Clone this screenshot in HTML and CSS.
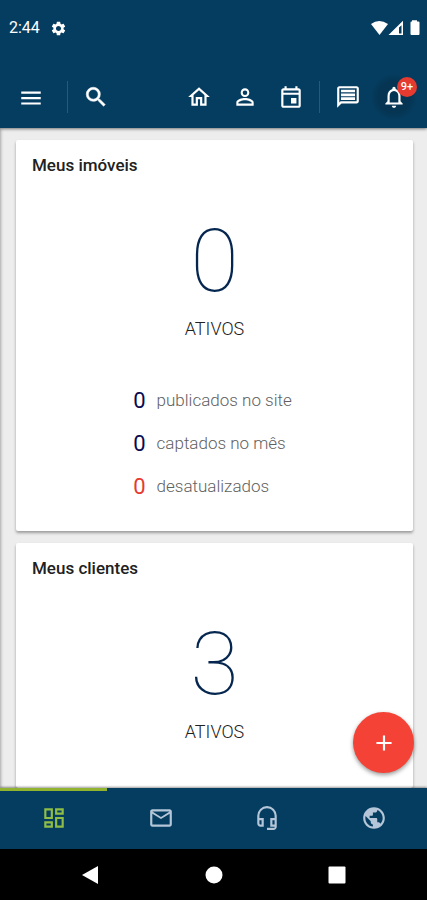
FILE: index.html
```html
<!DOCTYPE html>
<html lang="pt-BR">
<head>
<meta charset="utf-8">
<meta name="viewport" content="width=device-width, initial-scale=1">
<title>Painel</title>
<link rel="stylesheet" href="styles.css">
</head>
<body>
<header class="header">
  <div class="status">
    <span class="clock">2:44</span>
    <svg class="gear" viewBox="0 0 24 24"><path d="M19.14 12.94c.04-.3.06-.61.06-.94 0-.32-.02-.64-.07-.94l2.03-1.58c.18-.14.23-.41.12-.61l-1.92-3.32c-.12-.22-.37-.29-.59-.22l-2.39.96c-.5-.38-1.03-.7-1.62-.94l-.36-2.54c-.04-.24-.24-.41-.48-.41h-3.84c-.24 0-.43.17-.47.41l-.36 2.54c-.59.24-1.13.57-1.62.94l-2.39-.96c-.22-.08-.47 0-.59.22L2.74 8.87c-.12.21-.08.47.12.61l2.03 1.58c-.05.3-.09.63-.09.94s.02.64.07.94l-2.03 1.58c-.18.14-.23.41-.12.61l1.92 3.32c.12.22.37.29.59.22l2.39-.96c.5.38 1.03.7 1.62.94l.36 2.54c.05.24.24.41.48.41h3.84c.24 0 .44-.17.47-.41l.36-2.54c.59-.24 1.13-.56 1.62-.94l2.39.96c.22.08.47 0 .59-.22l1.92-3.32c.12-.22.07-.47-.12-.61l-2.01-1.58zM12 15.600c-1.980 0-3.600-1.620-3.600-3.600s1.620-3.600 3.600-3.600 3.600 1.620 3.600 3.600-1.620 3.600-3.600 3.600z"/></svg>
    <svg class="signals" viewBox="0 0 50 16"><path d="M0 4Q8-2 17 4L8.500 15Z"/><path fill-rule="evenodd" d="M17.500 15 32 .8V15ZM28 7.500V13.500H30.500V5.200Z"/><path d="M41 1.500V.3h5v1.200h1.500q1 0 1 1V14q0 1-1 1h-7q-1 0-1-1V2.500q0-1 1-1Z"/></svg>
  </div>
  <nav class="toolbar" aria-label="Principal">
    <button class="tool" aria-label="Menu"><svg viewBox="0 0 24 24"><path d="M3 19h18v-2H3v2zm0-5h18v-2H3v2zm0-7v2h18V7H3z"/></svg></button>
    <span class="divider divider-menu"></span>
    <button class="tool" aria-label="Buscar"><svg viewBox="0 0 24 24"><path stroke="currentColor" stroke-width=".5" d="M15.500 14h-.79l-.28-.27A6.471 6.471 0 0 0 16 9.500 6.500 6.500 0 1 0 9.500 16c1.610 0 3.090-.59 4.230-1.570l.27.28v.79l5 4.990L20.490 19l-4.990-5zm-6 0C7.010 14 5 11.990 5 9.500S7.010 5 9.500 5 14 7.010 14 9.500 11.990 14 9.500 14z"/></svg></button>
    <span class="spacer"></span>
    <button class="tool" aria-label="Início"><svg viewBox="0 0 24 24"><path d="M12 5.690l5 4.500V18h-2v-6H9v6H7v-7.810l5-4.500M12 3L2 12h3v8h6v-6h2v6h6v-8h3L12 3z"/></svg></button>
    <button class="tool" aria-label="Perfil"><svg viewBox="0 0 24 24"><path d="M12 5.900a2.100 2.100 0 1 1 0 4.200 2.100 2.100 0 0 1 0-4.200m0 9c2.970 0 6.100 1.460 6.100 2.100v1.100H5.900V17c0-.64 3.130-2.100 6.100-2.100M12 4C9.790 4 8 5.790 8 8s1.790 4 4 4 4-1.790 4-4-1.790-4-4-4zm0 9c-2.670 0-8 1.340-8 4v3h16v-3c0-2.660-5.330-4-8-4z"/></svg></button>
    <button class="tool" aria-label="Agenda"><svg viewBox="0 0 24 24"><path d="M19 4h-1V2h-2v2H8V2H6v2H5c-1.110 0-2 .9-2 2v14c0 1.100.89 2 2 2h14c1.100 0 2-.9 2-2V6c0-1.100-.9-2-2-2zm0 16H5V10h14v10zm0-12H5V6h14v2zm-7 5h5v5h-5z"/></svg></button>
    <span class="divider divider-tools"></span>
    <button class="tool" aria-label="Mensagens"><svg viewBox="0 0 24 24"><path d="M4 4h16v12H5.170L4 17.170V4m0-2c-1.100 0-2 .9-2 2v18l4-4h14c1.100 0 2-.9 2-2V4c0-1.100-.9-2-2-2H4zm1.500 3.300h13v2.400h-13zm0 3.500h13v2.400h-13zm0 3.500h13v2.400h-13z"/></svg></button>
    <button class="tool tool-alerts" aria-label="Notificações"><svg viewBox="0 0 24 24"><path d="M12 22c1.100 0 2-.9 2-2h-4c0 1.100.9 2 2 2zm6-6v-5c0-3.070-1.630-5.640-4.500-6.320V4c0-.83-.67-1.500-1.500-1.500s-1.500.67-1.500 1.500v.68C7.640 5.360 6 7.920 6 11v5l-2 2v1h16v-1l-2-2zm-2 1H8v-6c0-2.480 1.510-4.500 4-4.500s4 2.020 4 4.500v6z"/></svg><span class="badge">9+</span></button>
  </nav>
</header>

<div class="content">
  <main class="cards">
    <section class="card">
      <h2 class="title">Meus imóveis</h2>
      <div class="total">0</div>
      <div class="label">ATIVOS</div>
      <dl class="stats">
        <dt>0</dt><dd>publicados no site</dd>
        <dt>0</dt><dd>captados no mês</dd>
        <dt class="alert">0</dt><dd>desatualizados</dd>
      </dl>
    </section>
    <section class="card">
      <h2 class="title">Meus clientes</h2>
      <div class="total">3</div>
      <div class="label">ATIVOS</div>
    </section>
  </main>
  <button class="fab" aria-label="Adicionar"><svg viewBox="0 0 24 24"><path d="M19 13h-6v6h-2v-6H5v-2h6V5h2v6h6v2z"/></svg></button>
</div>

<nav class="tabs" aria-label="Seções">
  <a class="tab tab-active" href="#painel" aria-label="Painel"><svg viewBox="0 0 24 24"><path d="M19 5v2h-4V5h4M9 5v6H5V5h4m10 8v6h-4v-6h4M9 17v2H5v-2h4M21 3h-8v6h8V3zM11 3H3v10h8V3zm10 8h-8v10h8V11zm-10 4H3v6h8v-6z"/></svg></a>
  <a class="tab" href="#email" aria-label="E-mail"><svg viewBox="0 0 24 24"><path d="M20 4H4c-1.100 0-2 .9-2 2v12c0 1.100.9 2 2 2h16c1.100 0 2-.9 2-2V6c0-1.100-.9-2-2-2zm0 14H4V8l8 5 8-5v10zm-8-7L4 6h16l-8 5z"/></svg></a>
  <a class="tab" href="#suporte" aria-label="Suporte"><svg viewBox="0 0 24 24"><path d="M12 1a9 9 0 0 0-9 9v7c0 1.660 1.340 3 3 3h3v-8H5v-2c0-3.870 3.130-7 7-7s7 3.130 7 7v2h-4v8h4v1h-7v2h6c1.660 0 3-1.340 3-3V10a9 9 0 0 0-9-9zM7 14v4H6c-.55 0-1-.45-1-1v-3h2zm12 4h-2v-4h2v4z"/></svg></a>
  <a class="tab" href="#site" aria-label="Site"><svg viewBox="0 0 24 24"><path d="M12 2C6.480 2 2 6.480 2 12s4.480 10 10 10 10-4.480 10-10S17.520 2 12 2zm-1 17.930c-3.950-.49-7-3.850-7-7.930 0-.62.08-1.210.21-1.790L9 15v1c0 1.100.9 2 2 2v1.930zm6.900-2.540c-.26-.81-1-1.390-1.900-1.390h-1v-3c0-.55-.45-1-1-1H8v-2h2c.55 0 1-.45 1-1V7h2c1.100 0 2-.9 2-2v-.41c2.930 1.190 5 4.060 5 7.410 0 2.080-.8 3.970-2.100 5.390z"/></svg></a>
</nav>

<footer class="system">
  <button class="key" aria-label="Voltar"><svg viewBox="0 0 20 20"><path d="M1 10 17 1V19Z"/></svg></button>
  <button class="key" aria-label="Tela inicial"><svg viewBox="0 0 20 20"><circle cx="10" cy="10" r="8.500"/></svg></button>
  <button class="key" aria-label="Recentes"><svg viewBox="0 0 20 20"><rect x="1.500" y="1.500" width="17" height="17" rx="1"/></svg></button>
</footer>
</body>
</html>
```
FILE: styles.css
```css
* {
  box-sizing: border-box;
}

body {
  margin: 0;
  height: 100vh;
  display: flex;
  flex-direction: column;
  overflow: hidden;
  background: #ededed;
  color: #212121;
  font-family: Roboto, sans-serif;
}

button {
  border: 0;
  padding: 0;
  background: none;
  font: inherit;
}

svg {
  display: block;
  fill: currentColor;
}

.header {
  position: relative;
  z-index: 1;
  flex: none;
  background: #053d60;
  color: #fff;
  box-shadow: 0 1px 3px rgba(0, 0, 0, 0.5);
}

.status {
  display: flex;
  align-items: center;
  height: 56px;
  padding: 0 6px 0 9px;
}

.clock {
  font-size: 16px;
  line-height: 20px;
}

.gear {
  width: 17px;
  height: 17px;
  margin-left: 10px;
}

.signals {
  width: 50px;
  height: 16px;
  margin-left: auto;
}

.toolbar {
  display: flex;
  align-items: center;
  padding: 18px 10px 8px 8px;
}

.tool {
  position: relative;
  display: grid;
  place-items: center;
  width: 46px;
  height: 46px;
  border-radius: 50%;
  color: #fff;
}

.tool svg {
  width: 26px;
  height: 26px;
}

.tool-alerts {
  background: radial-gradient(circle, #053553 50%, #053d60 72%);
}

.badge {
  position: absolute;
  top: 3px;
  right: 0;
  width: 20px;
  height: 20px;
  border-radius: 50%;
  background: #e53a30;
  font-size: 11px;
  font-weight: 500;
  line-height: 20px;
  text-align: center;
}

.divider {
  width: 1px;
  height: 32px;
  background: #2a5875;
}

.divider-menu {
  margin: 0 5px 0 13px;
}

.divider-tools {
  margin: 0 5px;
}

.spacer {
  flex: 1;
}

.content {
  position: relative;
  flex: 1;
  min-height: 0;
  box-shadow: inset 3px 0 3px -2px rgba(0, 0, 0, 0.3);
}

.cards {
  display: flex;
  flex-direction: column;
  gap: 12px;
  height: 100%;
  padding: 12px 14px 0 16px;
  overflow: hidden;
}

.card {
  flex: none;
  padding: 13px 16px 23px;
  border-radius: 2px;
  background: #fff;
  box-shadow: 0 2px 3px rgba(0, 0, 0, 0.35);
  text-align: center;
}

.card:last-child {
  flex: 1 0 auto;
}

.title {
  margin: 0 0 38px;
  font-size: 17px;
  font-weight: 500;
  line-height: 24px;
  text-align: left;
}

.total {
  margin-bottom: 10px;
  color: #05264f;
  font-size: 88px;
  font-weight: 100;
  line-height: 92px;
}

.label {
  font-size: 18px;
  font-weight: 300;
  line-height: 24px;
}

.stats {
  display: grid;
  grid-template-columns: auto auto;
  justify-content: center;
  align-items: center;
  column-gap: 11px;
  margin: 38px 0 0;
  padding-right: 4px;
  line-height: 43px;
  text-align: left;
}

.stats dt {
  color: #0a0a50;
  font-size: 22px;
}

.stats .alert {
  color: #e53a30;
}

.stats dd {
  margin: 0;
  color: #616161;
  font-size: 17px;
  font-weight: 300;
}

.fab {
  position: absolute;
  right: 13px;
  bottom: 15px;
  display: grid;
  place-items: center;
  width: 61px;
  height: 61px;
  border-radius: 50%;
  background: #f44336;
  color: #fff;
  box-shadow: 0 2px 4px rgba(0, 0, 0, 0.4);
}

.fab svg {
  width: 26px;
  height: 26px;
}

.tabs {
  position: relative;
  display: grid;
  grid-template-columns: repeat(4, 1fr);
  flex: none;
  background: #053d60;
  box-shadow: 0 -1px 2px rgba(0, 0, 0, 0.4);
}

.tab {
  display: grid;
  place-items: center;
  height: 61px;
  padding-left: 1px;
  border-top: 3px solid transparent;
  border-bottom: 4px solid transparent;
  color: #b4c6d8;
}

.tab svg {
  width: 26px;
  height: 26px;
}

.tab-active {
  border-top-color: #92b32f;
  color: #8fbd45;
}

.system {
  display: flex;
  justify-content: center;
  align-items: center;
  flex: none;
  gap: 103px;
  height: 51px;
  background: #000;
}

.key {
  color: #fff;
}

.key svg {
  width: 20px;
  height: 20px;
}
```
